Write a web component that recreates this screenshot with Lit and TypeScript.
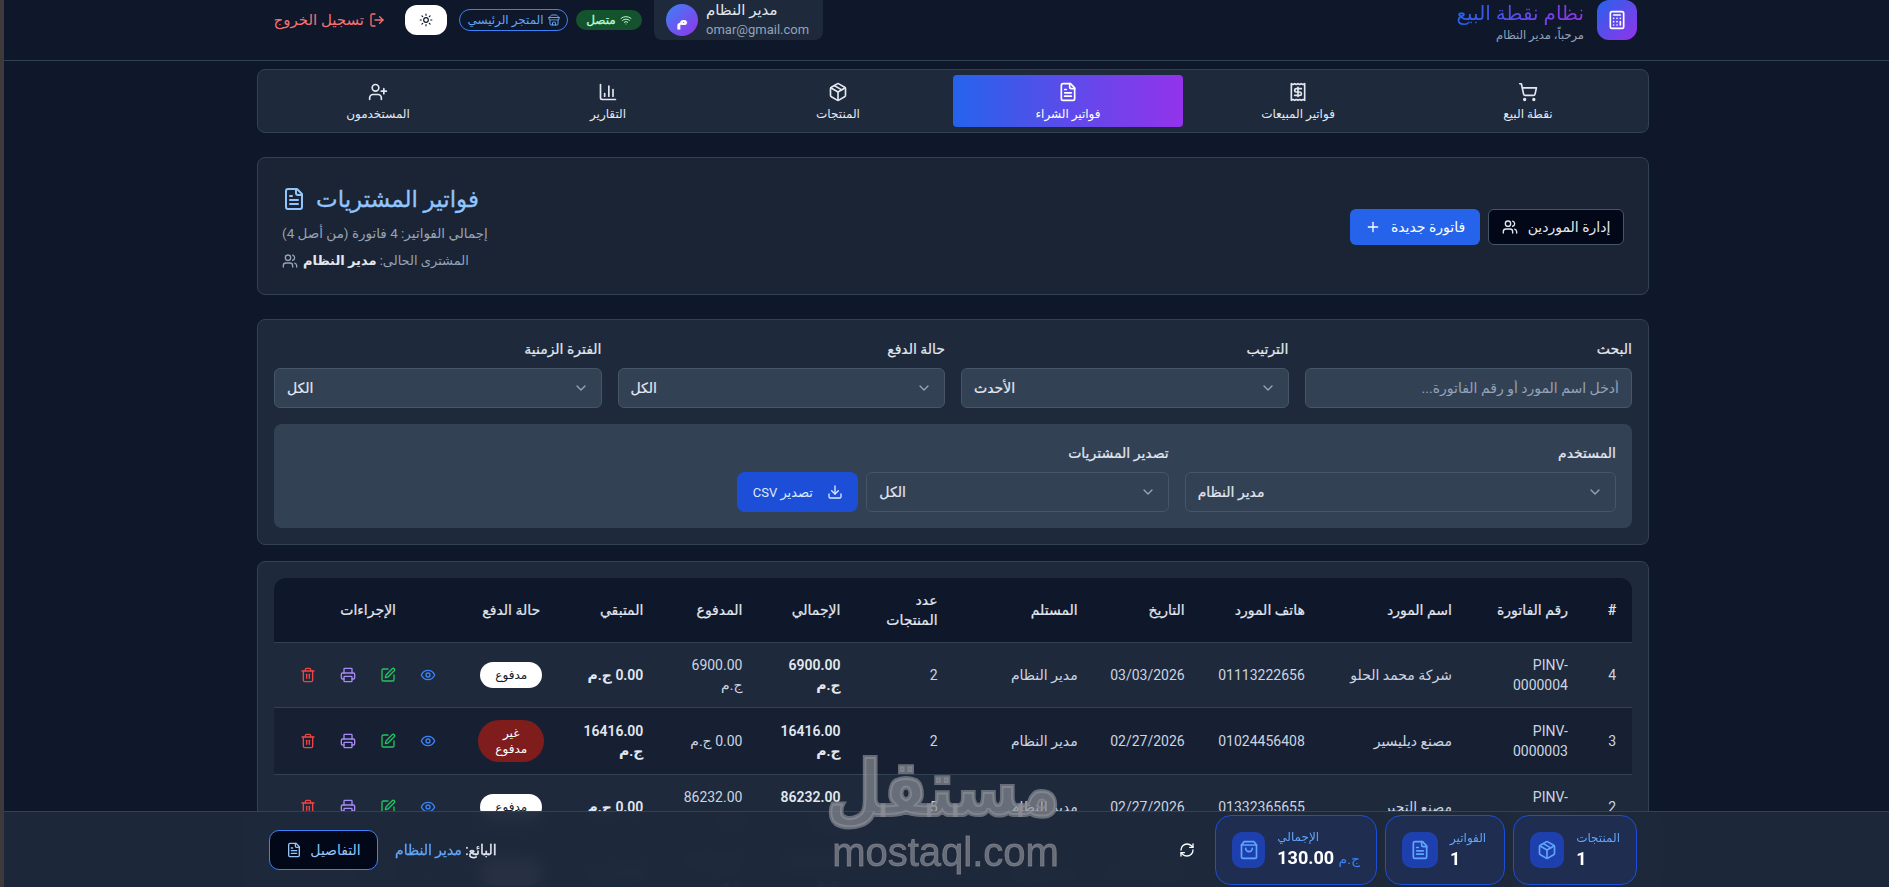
import { LitElement, css, html, svg } from "lit";
import { customElement } from "lit/decorators.js";

const ICONS = {
  calculator: svg`<rect x="4" y="2" width="16" height="20" rx="2"/><line x1="8" x2="16" y1="6" y2="6"/><line x1="16" x2="16" y1="14" y2="18"/><path d="M16 10h.01M12 10h.01M8 10h.01M12 14h.01M8 14h.01M12 18h.01M8 18h.01"/>`,
  logout: svg`<path d="M9 21H5a2 2 0 0 1-2-2V5a2 2 0 0 1 2-2h4"/><polyline points="16 17 21 12 16 7"/><line x1="21" x2="9" y1="12" y2="12"/>`,
  sun: svg`<circle cx="12" cy="12" r="4"/><path d="M12 2v2M12 20v2M4.93 4.93l1.41 1.41M17.66 17.66l1.41 1.41M2 12h2M20 12h2M6.34 17.66l-1.41 1.41M19.07 4.93l-1.41 1.41"/>`,
  store: svg`<path d="m2 7 4.41-4.41A2 2 0 0 1 7.83 2h8.34a2 2 0 0 1 1.42.59L22 7"/><path d="M4 12v8a2 2 0 0 0 2 2h12a2 2 0 0 0 2-2v-8"/><path d="M15 22v-4a2 2 0 0 0-2-2h-2a2 2 0 0 0-2 2v4"/><path d="M2 7h20"/><path d="M22 7v3a2 2 0 0 1-2 2a2.7 2.7 0 0 1-1.59-.63.7.7 0 0 0-.82 0A2.7 2.7 0 0 1 16 12a2.7 2.7 0 0 1-1.59-.63.7.7 0 0 0-.82 0A2.7 2.7 0 0 1 12 12a2.7 2.7 0 0 1-1.59-.63.7.7 0 0 0-.82 0A2.7 2.7 0 0 1 8 12a2.7 2.7 0 0 1-1.59-.63.7.7 0 0 0-.82 0A2.7 2.7 0 0 1 4 12a2 2 0 0 1-2-2V7"/>`,
  wifi: svg`<path d="M12 20h.01"/><path d="M2 8.82a15 15 0 0 1 20 0"/><path d="M5 12.86a10 10 0 0 1 14 0"/><path d="M8.5 16.43a5 5 0 0 1 7 0"/>`,
  userPlus: svg`<path d="M16 21v-2a4 4 0 0 0-4-4H6a4 4 0 0 0-4 4v2"/><circle cx="9" cy="7" r="4"/><line x1="19" x2="19" y1="8" y2="14"/><line x1="22" x2="16" y1="11" y2="11"/>`,
  chart: svg`<path d="M3 3v16a2 2 0 0 0 2 2h16"/><path d="M18 17V9"/><path d="M13 17V5"/><path d="M8 17v-3"/>`,
  box: svg`<path d="M11 21.73a2 2 0 0 0 2 0l7-4A2 2 0 0 0 21 16V8a2 2 0 0 0-1-1.73l-7-4a2 2 0 0 0-2 0l-7 4A2 2 0 0 0 3 8v8a2 2 0 0 0 1 1.73z"/><path d="M12 22V12"/><path d="m3.3 7 8.7 5 8.7-5"/><path d="m7.5 4.27 9 5.15"/>`,
  file: svg`<path d="M15 2H6a2 2 0 0 0-2 2v16a2 2 0 0 0 2 2h12a2 2 0 0 0 2-2V7Z"/><path d="M14 2v4a2 2 0 0 0 2 2h4"/><path d="M10 9H8"/><path d="M16 13H8"/><path d="M16 17H8"/>`,
  receipt: svg`<path d="M4 2v20l2-1 2 1 2-1 2 1 2-1 2 1 2-1 2 1V2l-2 1-2-1-2 1-2-1-2 1-2-1-2 1Z"/><path d="M16 8h-6a2 2 0 1 0 0 4h4a2 2 0 1 1 0 4H8"/><path d="M12 17.5v-11"/>`,
  cart: svg`<circle cx="8" cy="21" r="1"/><circle cx="19" cy="21" r="1"/><path d="M2.05 2.05h2l2.66 12.42a2 2 0 0 0 2 1.58h9.78a2 2 0 0 0 1.95-1.57l1.65-7.43H5.12"/>`,
  users: svg`<path d="M16 21v-2a4 4 0 0 0-4-4H6a4 4 0 0 0-4 4v2"/><circle cx="9" cy="7" r="4"/><path d="M22 21v-2a4 4 0 0 0-3-3.87"/><path d="M16 3.13a4 4 0 0 1 0 7.75"/>`,
  plus: svg`<path d="M5 12h14"/><path d="M12 5v14"/>`,
  download: svg`<path d="M21 15v4a2 2 0 0 1-2 2H5a2 2 0 0 1-2-2v-4"/><polyline points="7 10 12 15 17 10"/><line x1="12" x2="12" y1="15" y2="3"/>`,
  chevron: svg`<path d="m6 9 6 6 6-6"/>`,
  eye: svg`<path d="M2 12s3-7 10-7 10 7 10 7-3 7-10 7-10-7-10-7Z"/><circle cx="12" cy="12" r="3"/>`,
  edit: svg`<path d="M12 3H5a2 2 0 0 0-2 2v14a2 2 0 0 0 2 2h14a2 2 0 0 0 2-2v-7"/><path d="M18.375 2.625a1 1 0 0 1 3 3l-9.013 9.014a2 2 0 0 1-.853.505l-2.873.84a.5.5 0 0 1-.62-.62l.84-2.873a2 2 0 0 1 .506-.852z"/>`,
  printer: svg`<path d="M6 18H4a2 2 0 0 1-2-2v-5a2 2 0 0 1 2-2h16a2 2 0 0 1 2 2v5a2 2 0 0 1-2 2h-2"/><path d="M6 9V3a1 1 0 0 1 1-1h10a1 1 0 0 1 1 1v6"/><rect x="6" y="14" width="12" height="8" rx="1"/>`,
  trash: svg`<path d="M3 6h18"/><path d="M19 6v14c0 1-1 2-2 2H7c-1 0-2-1-2-2V6"/><path d="M8 6V4c0-1 1-2 2-2h4c1 0 2 1 2 2v2"/><line x1="10" x2="10" y1="11" y2="17"/><line x1="14" x2="14" y1="11" y2="17"/>`,
  bag: svg`<path d="M6 2 3 6v14a2 2 0 0 0 2 2h14a2 2 0 0 0 2-2V6l-3-4Z"/><path d="M3 6h18"/><path d="M16 10a4 4 0 0 1-8 0"/>`,
  refresh: svg`<path d="M3 12a9 9 0 0 1 9-9 9.75 9.75 0 0 1 6.74 2.74L21 8"/><path d="M21 3v5h-5"/><path d="M21 12a9 9 0 0 1-9 9 9.75 9.75 0 0 1-6.74-2.74L3 16"/><path d="M8 16H3v5"/>`,
};

type IconName = keyof typeof ICONS;

const icon = (name: IconName, cls = "i16") =>
  html`<svg class=${cls} viewBox="0 0 24 24" fill="none" stroke="currentColor" stroke-width="2" stroke-linecap="round" stroke-linejoin="round">${ICONS[name]}</svg>`;

const TABS: { label: string; icon: IconName; active?: boolean }[] = [
  { label: "المستخدمون", icon: "userPlus" },
  { label: "التقارير", icon: "chart" },
  { label: "المنتجات", icon: "box" },
  { label: "فواتير الشراء", icon: "file", active: true },
  { label: "فواتير المبيعات", icon: "receipt" },
  { label: "نقطة البيع", icon: "cart" },
];

const COLS = [48, 116, 147, 120, 107, 140, 97, 98, 99, 99, 98, 188];

const ROWS = [
  { id: "4", no: "PINV-0000004", name: "شركة محمد الحلو", phone: "01113222656", date: "03/03/2026", qty: "2", total: "6900.00", paid: "6900.00", rest: "0.00", ok: true },
  { id: "3", no: "PINV-0000003", name: "مصنع ديليسير", phone: "01024456408", date: "02/27/2026", qty: "2", total: "16416.00", paid: "0.00", rest: "16416.00", ok: false },
  { id: "2", no: "PINV-0000002", name: "مصنع التجير", phone: "01332365655", date: "02/27/2026", qty: "5", total: "86232.00", paid: "86232.00", rest: "0.00", ok: true },
  { id: "1", no: "PINV-0000001", name: "مصنع النور", phone: "01024456408", date: "02/27/2026", qty: "3", total: "12500.00", paid: "12500.00", rest: "0.00", ok: true },
];

@customElement("app-root")
export class AppRoot extends LitElement {
  public static styles = css`
    :host {
      display: block;
      position: relative;
      height: 887px;
      overflow: hidden;
      background: #0f172a;
      font-family: Roboto, "Noto Sans", "DejaVu Sans", sans-serif;
      font-size: 14px;
      color: #e2e8f0;
    }
    svg { display: block; flex: none; }
    .i12 { width: 12px; height: 12px; }
    .i14 { width: 14px; height: 14px; }
    .i16 { width: 16px; height: 16px; }
    .i20 { width: 20px; height: 20px; }
    .i24 { width: 24px; height: 24px; }

    .page {
      border-left: 4px solid #3d3a39;
      min-height: 887px;
    }

    .topbar {
      display: flex;
      justify-content: space-between;
      align-items: flex-start;
      height: 60px;
      padding: 0 252px 0 273px;
      border-bottom: 1px solid #334155;
    }
    .top-left { display: flex; align-items: center; height: 40px; }
    .logout {
      display: flex;
      align-items: center;
      justify-content: flex-end;
      gap: 5px;
      width: 108px;
      margin-right: 20px;
      color: #f87171;
      font-size: 15px;
      white-space: nowrap;
    }
    .logout span { direction: rtl; }
    .theme {
      display: flex;
      align-items: center;
      justify-content: center;
      width: 42px;
      height: 30px;
      margin-right: 12px;
      border-radius: 12px;
      background: #fff;
      color: #0f172a;
    }
    .store {
      display: flex;
      align-items: center;
      justify-content: center;
      gap: 4px;
      width: 109px;
      height: 22px;
      margin-right: 8px;
      border: 1px solid #3b82f6;
      border-radius: 999px;
      color: #60a5fa;
      font-size: 12px;
      direction: rtl;
      box-sizing: border-box;
    }
    .online {
      display: flex;
      align-items: center;
      justify-content: center;
      gap: 4px;
      width: 66px;
      height: 20px;
      margin-right: 12px;
      border-radius: 999px;
      background: #14532d;
      color: #bbf7d0;
      font-size: 12px;
      -webkit-text-stroke: 0.3px currentColor;
      direction: rtl;
    }
    .user {
      display: flex;
      align-items: center;
      gap: 8px;
      width: 169px;
      height: 47px;
      margin-top: -7px;
      padding: 7px 12px 0;
      box-sizing: border-box;
      border-radius: 0 0 8px 8px;
      background: #1e293b;
    }
    .avatar {
      display: flex;
      align-items: center;
      justify-content: center;
      width: 32px;
      height: 32px;
      border-radius: 50%;
      background: linear-gradient(135deg, #3b82f6, #9333ea);
      color: #fff;
      font-weight: 700;
      font-size: 16px;
    }
    .user-name { font-size: 15px; line-height: 20px; color: #e2e8f0; }
    .user-mail { font-size: 13px; line-height: 20px; color: #94a3b8; }

    .brand { display: flex; gap: 13px; }
    .brand-text { text-align: right; direction: rtl; }
    .brand-title {
      font-size: 20px;
      line-height: 26px;
      background: linear-gradient(270deg, #9333ea, #2563eb);
      -webkit-background-clip: text;
      background-clip: text;
      color: transparent;
    }
    .brand-sub { font-size: 11.5px; line-height: 18px; color: #94a3b8; }
    .brand-icon {
      display: flex;
      align-items: center;
      justify-content: center;
      width: 40px;
      height: 40px;
      border-radius: 12px;
      background: linear-gradient(135deg, #2563eb, #9333ea);
      color: #fff;
    }

    .main {
      display: flex;
      flex-direction: column;
      margin: 8px 240px 0 253px;
    }
    .card {
      background: #1e293b;
      border: 1px solid #334155;
      border-radius: 8px;
    }

    .nav {
      display: grid;
      grid-template-columns: repeat(6, 1fr);
      padding: 5px;
      margin-bottom: 24px;
    }
    .tab {
      display: flex;
      flex-direction: column;
      align-items: center;
      gap: 4px;
      height: 52px;
      padding-top: 7px;
      box-sizing: border-box;
      border-radius: 4px;
      font-size: 12px;
      line-height: 16px;
      color: #e2e8f0;
    }
    .tab.active {
      background: linear-gradient(90deg, #2563eb, #9333ea);
      color: #fff;
    }

    .head {
      display: flex;
      justify-content: space-between;
      align-items: center;
      padding: 24px 24px 23px;
      background: #1a2434;
      margin-bottom: 24px;
    }
    .head-info { display: flex; flex-direction: column; align-items: flex-start; }
    .head-title {
      display: flex;
      align-items: center;
      gap: 10px;
      height: 34px;
      color: #93c5fd;
      font-size: 23px;
      -webkit-text-stroke: 0.3px currentColor;
    }
    .head-line {
      margin-top: 7px;
      font-size: 13.5px;
      line-height: 20px;
      color: #94a3b8;
      direction: rtl;
    }
    .head-buyer {
      display: flex;
      align-items: center;
      gap: 5px;
      margin-top: 8px;
      font-size: 13px;
      line-height: 20px;
      color: #94a3b8;
    }
    .head-buyer b { color: #e2e8f0; }
    .head-buyer span { direction: rtl; }
    .head-actions { display: flex; gap: 8px; }
    .btn {
      display: flex;
      align-items: center;
      justify-content: center;
      box-sizing: border-box;
      height: 36px;
      border-radius: 6px;
      font-size: 14px;
      direction: rtl;
    }
    .btn-new { width: 130px; gap: 10px; background: #2563eb; color: #fff; }
    .btn-manage {
      width: 136px;
      gap: 10px;
      background: #020817;
      border: 1px solid #475569;
      color: #e2e8f0;
    }

    .filters {
      padding: 16px;
      margin-bottom: 16px;
    }
    .filter-grid {
      display: grid;
      grid-template-columns: repeat(4, 1fr);
      gap: 16px;
      direction: rtl;
    }
    .field-label {
      line-height: 26px;
      margin-bottom: 6px;
      color: #e2e8f0;
      -webkit-text-stroke: 0.2px currentColor;
    }
    .select, .search {
      box-sizing: border-box;
      width: 100%;
      height: 40px;
      background: #334155;
      border: 1px solid #475569;
      border-radius: 6px;
      font-family: inherit;
      font-size: 14px;
    }
    .select {
      display: flex;
      align-items: center;
      justify-content: space-between;
      padding: 0 12px;
      direction: ltr;
      color: #e2e8f0;
    }
    .select span { -webkit-text-stroke: 0.2px currentColor; }
    .select svg { color: #94a3b8; }
    .search { padding: 0 12px; color: #e2e8f0; outline: none; direction: rtl; }
    .search::placeholder { color: #94a3b8; opacity: 1; }
    .panel {
      display: grid;
      grid-template-columns: repeat(3, 1fr);
      gap: 16px;
      margin-top: 16px;
      padding: 16px;
      border-radius: 8px;
      background: #334155;
      direction: rtl;
    }
    .export-row { display: flex; gap: 8px; }
    .select-export { flex: 1; width: auto; }
    .btn-csv {
      width: 121px;
      flex: none;
      height: 40px;
      gap: 14px;
      font-size: 13px;
      background: #1d4ed8;
      color: #dbeafe;
      border-radius: 8px;
    }

    .table-card { padding: 16px; }
    table {
      width: 100%;
      table-layout: fixed;
      border-collapse: separate;
      border-spacing: 0;
      direction: rtl;
      border-radius: 12px 12px 0 0;
      overflow: hidden;
    }
    th, td {
      padding: 12px 16px;
      text-align: right;
      line-height: 20px;
      border-bottom: 1px solid #334155;
      vertical-align: middle;
    }
    th {
      background: #0f172a;
      font-weight: 400;
      color: #e2e8f0;
      -webkit-text-stroke: 0.2px currentColor;
    }
    td { color: #cbd5e1; background: #1e293b; }
    tr.alt td { background: #172033; }
    td.strong { font-weight: 600; color: #e2e8f0; }
    th.center, td.center { text-align: center; }
    .badge {
      display: inline-block;
      vertical-align: middle;
      padding: 5px 15px;
      border-radius: 999px;
      font-size: 12px;
      line-height: 16px;
      background: #fff;
      color: #0f172a;
    }
    .badge.unpaid { background: #7f1d1d; color: #fff; }
    .actions { display: flex; justify-content: center; gap: 24px; direction: rtl; }
    .c-eye { color: #3b82f6; }
    .c-edit { color: #22c55e; }
    .c-print { color: #a78bfa; }
    .c-trash { color: #ef4444; }

    .bottom {
      position: absolute;
      left: 4px;
      right: 0;
      bottom: 0;
      height: 76px;
      box-sizing: border-box;
      display: flex;
      align-items: center;
      justify-content: space-between;
      padding: 0 252px 0 265px;
      border-top: 1px solid #334155;
      background: rgba(30, 41, 59, 0.96);
      backdrop-filter: blur(8px);
    }
    .bottom-left { display: flex; align-items: center; gap: 17px; }
    .btn-details {
      width: 109px;
      height: 40px;
      gap: 8px;
      background: #020817;
      border: 1px solid #3b82f6;
      border-radius: 10px;
      color: #93c5fd;
    }
    .seller { direction: rtl; color: #e2e8f0; -webkit-text-stroke: 0.3px currentColor; }
    .seller b { color: #60a5fa; font-weight: 400; }
    .bottom-right { display: flex; align-items: center; gap: 8px; }
    .refresh { margin-right: 12px; color: #fff; }
    .stat {
      display: flex;
      align-items: center;
      gap: 12px;
      box-sizing: border-box;
      height: 70px;
      padding: 0 16px;
      border: 1px solid #1d4ed8;
      border-radius: 16px;
      background: #1e2d50;
    }
    .stat-total { width: 162px; }
    .stat-bills { width: 120px; }
    .stat-items { width: 124px; }
    .stat-icon {
      display: flex;
      align-items: center;
      justify-content: center;
      width: 36px;
      height: 36px;
      border-radius: 10px;
      background: #1e40af;
      color: #60a5fa;
    }
    .stat-label { font-size: 12px; line-height: 18px; color: #60a5fa; }
    .stat-value { font-size: 18px; line-height: 24px; font-weight: 700; color: #fff; white-space: nowrap; }
    .stat-value span { font-size: 14px; font-weight: 400; color: #3b82f6; }

    .watermark {
      position: absolute;
      left: 833px;
      top: 745px;
      width: 227px;
      text-align: center;
      color: rgba(140, 143, 150, 0.68);
      pointer-events: none;
    }
    .wm-ar {
      font-size: 64px;
      font-weight: 700;
      line-height: 90px;
      direction: rtl;
      -webkit-text-stroke: 3.5px currentColor;
      transform: scaleY(1.2);
    }
    .wm-en {
      font-family: "Liberation Sans", sans-serif;
      font-size: 40px;
      line-height: 34px;
      margin-left: -2px;
      -webkit-text-stroke: 0.8px currentColor;
    }
  `;

  private renderTop() {
    return html`<header class="topbar">
      <div class="top-left">
        <div class="logout"><span>تسجيل الخروج</span>${icon("logout", "i16")}</div>
        <div class="theme">${icon("sun", "i14")}</div>
        <div class="store">${icon("store", "i12")}<span>المتجر الرئيسي</span></div>
        <div class="online">${icon("wifi", "i12")}<span>متصل</span></div>
        <div class="user">
          <div class="avatar">م</div>
          <div>
            <div class="user-name">مدير النظام</div>
            <div class="user-mail">omar@gmail.com</div>
          </div>
        </div>
      </div>
      <div class="brand">
        <div class="brand-text">
          <div class="brand-title">نظام نقطة البيع</div>
          <div class="brand-sub">مرحباً، مدير النظام</div>
        </div>
        <div class="brand-icon">${icon("calculator", "i20")}</div>
      </div>
    </header>`;
  }

  private renderFilters() {
    const select = (value: string) =>
      html`<div class="select"><span>${value}</span>${icon("chevron", "i16")}</div>`;
    return html`<section class="card filters">
      <div class="filter-grid">
        <div>
          <div class="field-label">البحث</div>
          <input class="search" placeholder="أدخل اسم المورد أو رقم الفاتورة..." />
        </div>
        <div><div class="field-label">الترتيب</div>${select("الأحدث")}</div>
        <div><div class="field-label">حالة الدفع</div>${select("الكل")}</div>
        <div><div class="field-label">الفترة الزمنية</div>${select("الكل")}</div>
      </div>
      <div class="panel">
        <div><div class="field-label">المستخدم</div>${select("مدير النظام")}</div>
        <div>
          <div class="field-label">تصدير المشتريات</div>
          <div class="export-row">
            <div class="select select-export"><span>الكل</span>${icon("chevron", "i16")}</div>
            <div class="btn btn-csv">${icon("download", "i16")}<span>تصدير CSV</span></div>
          </div>
        </div>
      </div>
    </section>`;
  }

  private renderTable() {
    return html`<section class="card table-card">
      <table>
        <colgroup>${COLS.map((w) => html`<col style="width:${w}px" />`)}</colgroup>
        <thead>
          <tr>
            <th>#</th>
            <th>رقم الفاتورة</th>
            <th>اسم المورد</th>
            <th>هاتف المورد</th>
            <th>التاريخ</th>
            <th>المستلم</th>
            <th>عدد المنتجات</th>
            <th>الإجمالي</th>
            <th>المدفوع</th>
            <th>المتبقي</th>
            <th class="center">حالة الدفع</th>
            <th class="center">الإجراءات</th>
          </tr>
        </thead>
        <tbody>
          ${ROWS.map(
            (r, i) => html`<tr class=${i % 2 ? "alt" : ""}>
              <td>${r.id}</td>
              <td>${r.no}</td>
              <td>${r.name}</td>
              <td>${r.phone}</td>
              <td>${r.date}</td>
              <td>مدير النظام</td>
              <td>${r.qty}</td>
              <td class="strong">${r.total} ج.م</td>
              <td>${r.paid} ج.م</td>
              <td class="strong">${r.rest} ج.م</td>
              <td class="center">
                <span class="badge ${r.ok ? "" : "unpaid"}">${r.ok ? "مدفوع" : "غير مدفوع"}</span>
              </td>
              <td>
                <div class="actions">
                  <span class="c-eye">${icon("eye")}</span>
                  <span class="c-edit">${icon("edit")}</span>
                  <span class="c-print">${icon("printer")}</span>
                  <span class="c-trash">${icon("trash")}</span>
                </div>
              </td>
            </tr>`
          )}
        </tbody>
      </table>
    </section>`;
  }

  private renderBottom() {
    return html`<footer class="bottom">
      <div class="bottom-left">
        <div class="btn btn-details"><span>التفاصيل</span>${icon("file")}</div>
        <div class="seller">البائع: <b>مدير النظام</b></div>
      </div>
      <div class="bottom-right">
        <div class="refresh">${icon("refresh")}</div>
        <div class="stat stat-total">
          <div class="stat-icon">${icon("bag", "i20")}</div>
          <div>
            <div class="stat-label">الإجمالي</div>
            <div class="stat-value">130.00 <span>ج.م</span></div>
          </div>
        </div>
        <div class="stat stat-bills">
          <div class="stat-icon">${icon("file", "i20")}</div>
          <div>
            <div class="stat-label">الفواتير</div>
            <div class="stat-value">1</div>
          </div>
        </div>
        <div class="stat stat-items">
          <div class="stat-icon">${icon("box", "i20")}</div>
          <div>
            <div class="stat-label">المنتجات</div>
            <div class="stat-value">1</div>
          </div>
        </div>
      </div>
    </footer>`;
  }

  public render() {
    return html`<div class="page">
        ${this.renderTop()}
        <main class="main">
          <nav class="card nav">
            ${TABS.map(
              (t) => html`<div class="tab ${t.active ? "active" : ""}">${icon(t.icon, "i20")}<span>${t.label}</span></div>`
            )}
          </nav>
          <section class="card head">
            <div class="head-info">
              <div class="head-title">${icon("file", "i24")}<span>فواتير المشتريات</span></div>
              <div class="head-line">إجمالي الفواتير: 4 فاتورة (من أصل 4)</div>
              <div class="head-buyer">${icon("users")}<span>المشترى الحالى: <b>مدير النظام</b></span></div>
            </div>
            <div class="head-actions">
              <div class="btn btn-new"><span>فاتورة جديدة</span>${icon("plus")}</div>
              <div class="btn btn-manage"><span>إدارة الموردين</span>${icon("users")}</div>
            </div>
          </section>
          ${this.renderFilters()} ${this.renderTable()}
        </main>
      </div>
      ${this.renderBottom()}
      <div class="watermark">
        <div class="wm-ar">مستقل</div>
        <div class="wm-en">mostaql.com</div>
      </div>`;
  }
}
